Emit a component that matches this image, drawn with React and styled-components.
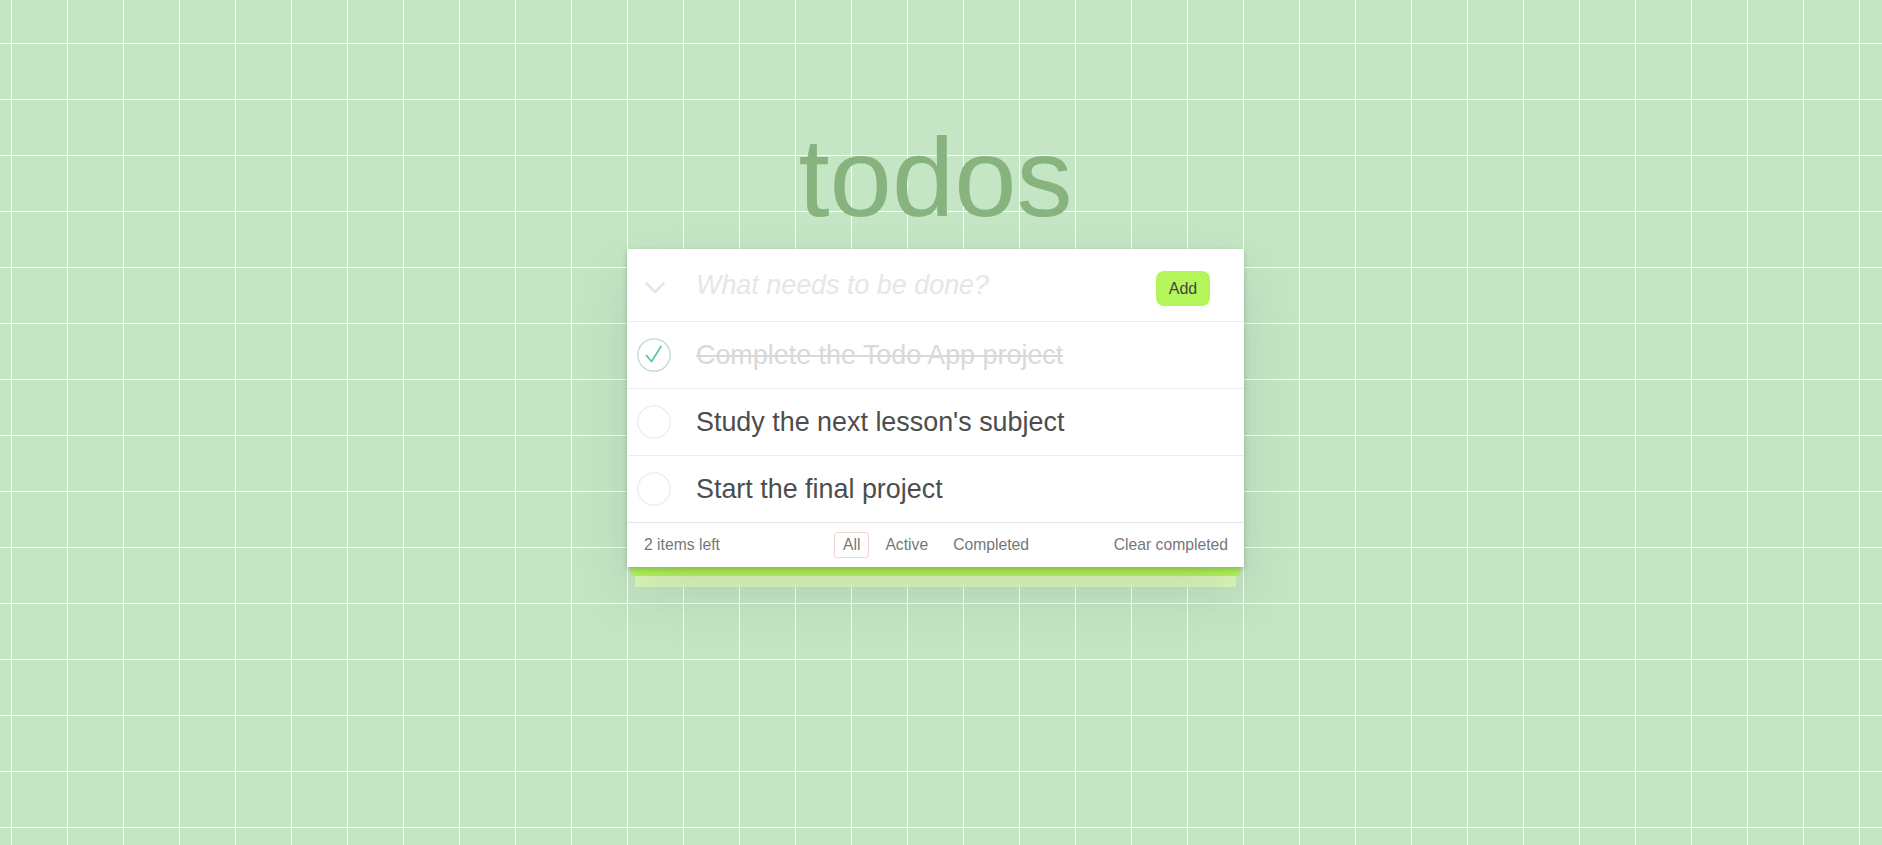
import React, { useState } from "react";
import styled, { createGlobalStyle } from "styled-components";

const GlobalStyle = createGlobalStyle`
  html, body {
    margin: 0;
    padding: 0;
  }
  html {
    background-color: #c5e6c5;
    background-image:
      linear-gradient(to right, rgba(250, 255, 246, 0.95) 1px, transparent 1px),
      linear-gradient(to bottom, rgba(250, 255, 246, 0.95) 1px, transparent 1px);
    background-size: 56px 56px;
    background-position: 11px 43px;
    min-height: 100%;
  }
  body {
    min-height: 100vh;
    font-family: "Liberation Sans", Arial, Helvetica, sans-serif;
    color: #4d4d4d;
    -webkit-font-smoothing: antialiased;
  }
  * { box-sizing: border-box; }
`;

const Page = styled.main`
  display: flex;
  flex-direction: column;
  align-items: center;
  padding: 122px 11px 40px 0;
`;

const Title = styled.h1`
  margin: 0 0 15px;
  font-family: "Liberation Sans", Arial, sans-serif;
  font-weight: 400;
  font-size: 112px;
  line-height: 112px;
  color: #87b37e;
  text-align: center;
`;

const Stack = styled.section`
  width: 617px;
  display: flex;
  flex-direction: column;
`;

const Card = styled.div`
  background: #fff;
  box-shadow: 0 2px 5px rgba(0, 0, 0, 0.2), 0 28px 56px rgba(0, 0, 0, 0.1);
  position: relative;
  z-index: 2;
`;

const Sheet = styled.div`
  height: ${(p) => p.$h}px;
  margin: 0 ${(p) => p.$inset}px;
  background: ${(p) => p.$color};
  position: relative;
  z-index: ${(p) => p.$z};
`;

const Header = styled.form`
  display: flex;
  align-items: center;
  height: 72px;
`;

const ToggleAll = styled.div`
  width: 55px;
  display: flex;
  justify-content: center;
  align-items: center;
  padding-top: 5px;
`;

const NewTodo = styled.input`
  flex: 1;
  min-width: 0;
  border: none;
  outline: none;
  background: transparent;
  padding: 0 0 0 14px;
  font-family: "Liberation Sans", Arial, sans-serif;
  font-size: 26.9px;
  color: #4d4d4d;
  &::placeholder {
    font-style: italic;
    color: #e6e6e6;
  }
`;

const AddButton = styled.button`
  width: 54px;
  height: 35px;
  margin: 7px 34px 0 12px;
  border: none;
  border-radius: 8px;
  background: #b4f55a;
  color: #444;
  font-family: "Liberation Sans", Arial, sans-serif;
  font-size: 16px;
  cursor: pointer;
`;

const List = styled.ul`
  list-style: none;
  margin: 0;
  padding: 0;
`;

const Item = styled.li`
  display: flex;
  align-items: center;
  height: 67px;
  border-top: 1px solid #ededed;
  padding-left: 10px;
`;

const Toggle = styled.button`
  width: 34px;
  height: 34px;
  padding: 0;
  border: none;
  background: none;
  display: flex;
  cursor: pointer;
`;

const Label = styled.label`
  margin-left: 25px;
  font-size: 26.9px;
  line-height: 1.2;
  color: ${(p) => (p.$done ? "#d9d9d9" : "#4d4d4d")};
  text-decoration: ${(p) => (p.$done ? "line-through" : "none")};
  white-space: nowrap;
`;

const Footer = styled.footer`
  display: grid;
  grid-template-columns: 1fr auto 1fr;
  align-items: center;
  height: 45px;
  border-top: 1px solid #e6e6e6;
  padding: 0 16px 0 17px;
  font-size: 15.7px;
  color: #777;
`;

const Count = styled.span`
  justify-self: start;
`;

const Filters = styled.ul`
  list-style: none;
  display: flex;
  gap: 7px;
  margin: 0 0 1px 0;
  padding: 0;
`;

const FilterLink = styled.a`
  display: block;
  padding: 3px 8px;
  line-height: 18px;
  border: 1px solid ${(p) => (p.$selected ? "rgba(175, 47, 47, 0.2)" : "transparent")};
  border-radius: 3px;
  color: #777;
  text-decoration: none;
  cursor: pointer;
`;

const ClearButton = styled.button`
  justify-self: end;
  border: none;
  background: none;
  padding: 0;
  font-family: "Liberation Sans", Arial, sans-serif;
  font-size: 15.7px;
  color: #777;
  cursor: pointer;
`;

function Chevron() {
  return (
    <svg width="20" height="12" viewBox="0 0 20 12" aria-hidden="true">
      <polyline
        points="1.5,1.5 10,10 18.5,1.5"
        fill="none"
        stroke="#e6e6e6"
        strokeWidth="2.6"
        strokeLinecap="round"
        strokeLinejoin="round"
      />
    </svg>
  );
}

function CheckCircle({ done }) {
  return (
    <svg width="34" height="34" viewBox="0 0 34 34" aria-hidden="true">
      <circle
        cx="17"
        cy="17"
        r="16.2"
        fill="none"
        stroke={done ? "#bddad5" : "#ededed"}
        strokeWidth="1.3"
      />
      {done && (
        <polyline
          points="9.5,17.5 14.5,23.5 24,8.5"
          fill="none"
          stroke="#5dc2af"
          strokeWidth="1.8"
          strokeLinecap="round"
          strokeLinejoin="round"
        />
      )}
    </svg>
  );
}

const initialTodos = [
  { id: 1, text: "Complete the Todo App project", done: true },
  { id: 2, text: "Study the next lesson's subject", done: false },
  { id: 3, text: "Start the final project", done: false },
];

export default function App() {
  const [todos, setTodos] = useState(initialTodos);
  const [filter, setFilter] = useState("All");
  const left = todos.filter((t) => !t.done).length;

  const toggle = (id) =>
    setTodos((ts) => ts.map((t) => (t.id === id ? { ...t, done: !t.done } : t)));

  return (
    <>
      <GlobalStyle />
      <Page>
        <Title>todos</Title>
        <Stack>
          <Card>
            <Header onSubmit={(e) => e.preventDefault()}>
              <ToggleAll>
                <Chevron />
              </ToggleAll>
              <NewTodo placeholder="What needs to be done?" />
              <AddButton type="submit">Add</AddButton>
            </Header>
            <List>
              {todos.map((t) => (
                <Item key={t.id}>
                  <Toggle type="button" onClick={() => toggle(t.id)}>
                    <CheckCircle done={t.done} />
                  </Toggle>
                  <Label $done={t.done}>{t.text}</Label>
                </Item>
              ))}
            </List>
            <Footer>
              <Count>{left} items left</Count>
              <Filters>
                {["All", "Active", "Completed"].map((f) => (
                  <li key={f}>
                    <FilterLink $selected={filter === f} onClick={() => setFilter(f)}>
                      {f}
                    </FilterLink>
                  </li>
                ))}
              </Filters>
              <ClearButton type="button">Clear completed</ClearButton>
            </Footer>
          </Card>
          <Sheet $h={9} $inset={4} $color="#b3f55c" $z={1} />
          <Sheet $h={11} $inset={8} $color="#dcf9bb" $z={0} />
        </Stack>
      </Page>
    </>
  );
}
